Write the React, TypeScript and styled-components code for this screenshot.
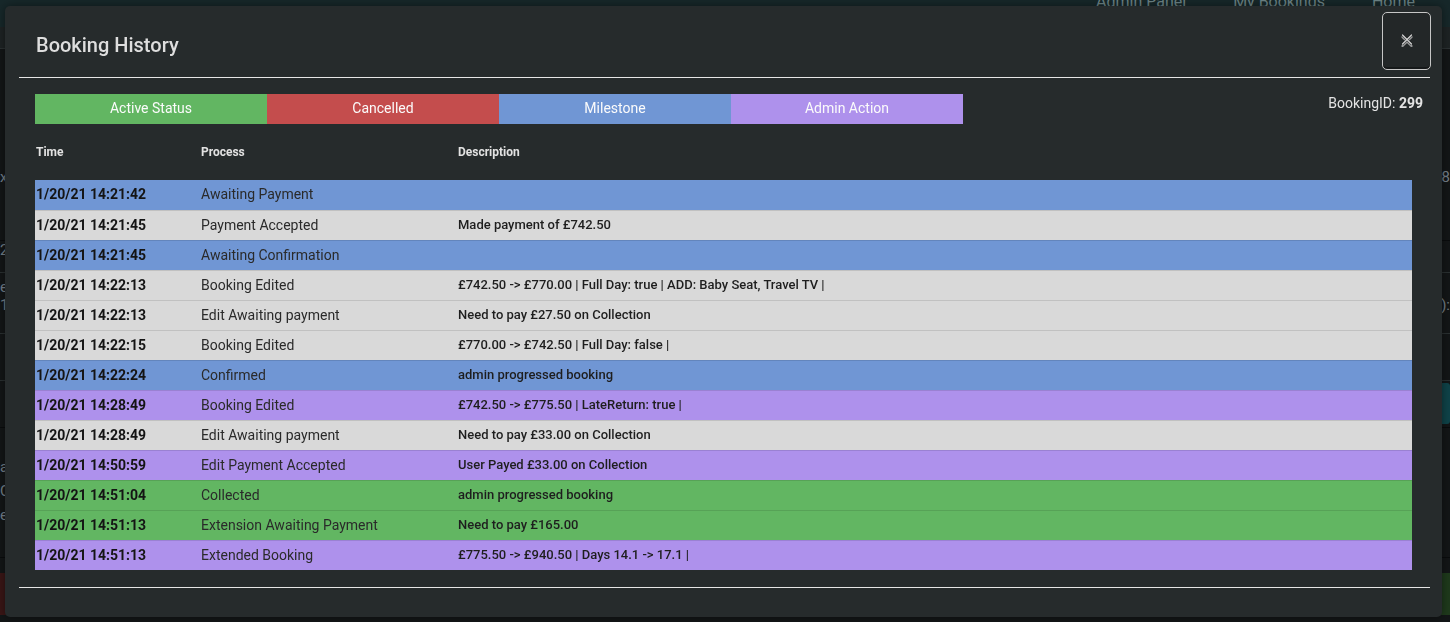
import React from "react";
import styled, { createGlobalStyle } from "styled-components";

const GlobalStyle = createGlobalStyle`
  html, body { margin: 0; padding: 0; height: 100%; }
  body {
    background: #131617;
    font-family: Roboto, "Liberation Sans", Arial, sans-serif;
    overflow: hidden;
  }
  * { box-sizing: border-box; }
`;

/* ---------- dimmed page behind the modal ---------- */
const Page = styled.div`
  height: 622px;
  display: flex;
  flex-direction: column;
  overflow: hidden;
`;

const NavBar = styled.nav`
  height: 27px;
  flex: none;
  background: #17282a;
  display: flex;
  justify-content: flex-end;
  align-items: flex-start;
  gap: 47px;
  padding-right: 35px;
`;

const NavLink = styled.span`
  font-size: 16px;
  line-height: 16px;
  color: #6d8486;
  margin-top: -6px;
`;

const SubBar = styled.div`
  height: 22px;
  flex: none;
  background: #1e2324;
  border-bottom: 1px solid #2c3233;
`;

const BgRow = styled.div<{ $h: number; $pad: number; $line?: string; $lh?: number }>`
  height: ${(p) => p.$h}px;
  flex: none;
  padding-top: ${(p) => p.$pad}px;
  display: flex;
  justify-content: space-between;
  align-items: flex-start;
  border-bottom: 1px solid ${(p) => p.$line || "#0a0c0d"};
  font-size: 15px;
  line-height: ${(p) => p.$lh || 18}px;
  color: #75808a;
  white-space: pre;
`;

const BgBox = styled.div<{ $bg: string }>`
  width: 120px;
  height: 41px;
  margin-top: 2px;
  background: ${(p) => p.$bg};
  border-radius: 3px;
`;

const BgBoxes = styled.div`
  height: 42px;
  margin-top: 15px;
  display: flex;
  justify-content: space-between;
`;

const BgBottomBox = styled.div<{ $bg: string }>`
  width: 160px;
  height: 42px;
  background: ${(p) => p.$bg};
`;

/* ---------- modal ---------- */
const Modal = styled.div`
  position: fixed;
  left: 5px;
  top: 6px;
  width: 1437px;
  height: 611px;
  background: #262b2c;
  border-radius: 5px;
  box-shadow: 0 0 10px rgba(0, 0, 0, 0.45);
  display: flex;
  flex-direction: column;
  color: #dddddd;
`;

const Header = styled.div`
  height: 71px;
  flex: none;
  display: flex;
  justify-content: space-between;
  align-items: flex-start;
  padding: 6px 11px 0 31px;
`;

const Title = styled.h5`
  margin: 21px 0 0;
  font-size: 20px;
  font-weight: 500;
  line-height: 24px;
  color: #dedede;
`;

const CloseButton = styled.button`
  width: 49px;
  height: 58px;
  padding: 0 0 4px;
  background: #232728;
  border: 1px solid #c6c6c6;
  border-radius: 5px;
  box-shadow: inset 0 -2px 0 rgba(0, 0, 0, 0.35);
  display: flex;
  align-items: center;
  justify-content: center;
  cursor: pointer;
  svg {
    display: block;
    filter: drop-shadow(0 2px 0 rgba(190, 190, 190, 0.75));
  }
`;

const Divider = styled.div`
  height: 1px;
  flex: none;
  background: #e6e6e6;
  margin: 0 12px 0 14px;
`;

const Body = styled.div`
  padding: 16px 19px 0 30px;
  display: flex;
  flex-direction: column;
`;

const TopRow = styled.div`
  display: flex;
  justify-content: space-between;
  align-items: flex-start;
`;

const Legend = styled.div`
  display: flex;
`;

const LegendItem = styled.div<{ $bg: string }>`
  width: 232px;
  height: 30px;
  background: ${(p) => p.$bg};
  color: #fbfbfb;
  font-size: 14px;
  line-height: 28px;
  text-align: center;
`;

const BookingId = styled.div`
  font-size: 14px;
  line-height: 18px;
  color: #e4e4e4;
  b { font-weight: 700; }
`;

const Table = styled.div`
  margin-right: 11px;
  display: flex;
  flex-direction: column;
`;

const columns = "165px 257px 1fr";

const HeadRow = styled.div`
  display: grid;
  grid-template-columns: ${columns};
  height: 56px;
  align-items: center;
  font-size: 12px;
  font-weight: 700;
  color: #e2e2e2;
`;

const HeadCell = styled.div`
  padding-left: 1px;
`;

const Row = styled.div<{ $bg: string }>`
  display: grid;
  grid-template-columns: ${columns};
  height: 30px;
  padding-bottom: 2px;
  align-items: center;
  background: ${(p) => p.$bg};
  color: #1f1f1f;
  & + & { border-top: 1px solid rgba(0, 0, 0, 0.11); }
`;

const TimeCell = styled.div`
  padding-left: 1px;
  font-size: 14px;
  font-weight: 700;
  color: #141414;
`;

const ProcessCell = styled.div`
  padding-left: 1px;
  font-size: 14px;
  color: #2a2a2a;
`;

const DescCell = styled.div`
  padding-left: 1px;
  font-size: 13px;
  font-weight: 500;
  color: #1e1e1e;
`;

const Footer = styled.div`
  margin-top: 17px;
  display: flex;
  flex-direction: column;
`;

const C = {
  green: "#62b662",
  red: "#c44d4d",
  blue: "#7096d4",
  purple: "#ae91ec",
  gray: "#d9d9d9",
};

type Entry = { c: string; t: string; p: string; d: string };

const entries: Entry[] = [
  { c: C.blue, t: "1/20/21 14:21:42", p: "Awaiting Payment", d: "" },
  { c: C.gray, t: "1/20/21 14:21:45", p: "Payment Accepted", d: "Made payment of £742.50" },
  { c: C.blue, t: "1/20/21 14:21:45", p: "Awaiting Confirmation", d: "" },
  { c: C.gray, t: "1/20/21 14:22:13", p: "Booking Edited", d: "£742.50 -> £770.00 | Full Day: true | ADD: Baby Seat, Travel TV |" },
  { c: C.gray, t: "1/20/21 14:22:13", p: "Edit Awaiting payment", d: "Need to pay £27.50 on Collection" },
  { c: C.gray, t: "1/20/21 14:22:15", p: "Booking Edited", d: "£770.00 -> £742.50 | Full Day: false |" },
  { c: C.blue, t: "1/20/21 14:22:24", p: "Confirmed", d: "admin progressed booking" },
  { c: C.purple, t: "1/20/21 14:28:49", p: "Booking Edited", d: "£742.50 -> £775.50 | LateReturn: true |" },
  { c: C.gray, t: "1/20/21 14:28:49", p: "Edit Awaiting payment", d: "Need to pay £33.00 on Collection" },
  { c: C.purple, t: "1/20/21 14:50:59", p: "Edit Payment Accepted", d: "User Payed £33.00 on Collection" },
  { c: C.green, t: "1/20/21 14:51:04", p: "Collected", d: "admin progressed booking" },
  { c: C.green, t: "1/20/21 14:51:13", p: "Extension Awaiting Payment", d: "Need to pay £165.00" },
  { c: C.purple, t: "1/20/21 14:51:13", p: "Extended Booking", d: "£775.50 -> £940.50 | Days 14.1 -> 17.1 |" },
];

export default function App() {
  return (
    <>
      <GlobalStyle />
      <Page>
        <NavBar>
          <NavLink>Admin Panel</NavLink>
          <NavLink>My Bookings</NavLink>
          <NavLink>Home</NavLink>
        </NavBar>
        <SubBar />
        <BgRow $h={192} $pad={119}>
          <span>xi</span>
          <span>8</span>
        </BgRow>
        <BgRow $h={32} $pad={0} $line="#2a3031">
          <span>2</span>
          <span />
        </BgRow>
        <BgRow $h={61} $pad={5} $line="#2a3031">
          <span>{"e\n1"}</span>
          <span>{"\n):"}</span>
        </BgRow>
        <BgRow $h={47} $pad={0} $line="#2a3031">
          <span />
          <span />
        </BgRow>
        <BgRow $h={47} $pad={0}>
          <span />
          <BgBox $bg="#0f4349" />
        </BgRow>
        <BgRow $h={130} $pad={27} $lh={24}>
          <span>{"ar\nC\ne"}</span>
          <span />
        </BgRow>
        <BgBoxes>
          <BgBottomBox $bg="#3a1616" />
          <BgBottomBox $bg="#1f3a1c" />
        </BgBoxes>
      </Page>

      <Modal>
        <Header>
          <Title>Booking History</Title>
          <CloseButton aria-label="Close">
            <svg width="12" height="11" viewBox="0 0 12 11">
              <path
                d="M1.5 1 L10.5 10 M10.5 1 L1.5 10"
                stroke="#1a1c1d"
                strokeWidth="2.2"
                strokeLinecap="round"
              />
              <path
                d="M1.5 1 L10.5 10 M10.5 1 L1.5 10"
                stroke="#d2d2d2"
                strokeWidth="1.3"
                strokeLinecap="round"
              />
            </svg>
          </CloseButton>
        </Header>
        <Divider />
        <Body>
          <TopRow>
            <Legend>
              <LegendItem $bg={C.green}>Active Status</LegendItem>
              <LegendItem $bg={C.red}>Cancelled</LegendItem>
              <LegendItem $bg={C.blue}>Milestone</LegendItem>
              <LegendItem $bg={C.purple}>Admin Action</LegendItem>
            </Legend>
            <BookingId>
              BookingID: <b>299</b>
            </BookingId>
          </TopRow>
          <Table>
            <HeadRow>
              <HeadCell>Time</HeadCell>
              <HeadCell>Process</HeadCell>
              <HeadCell>Description</HeadCell>
            </HeadRow>
            {entries.map((e, i) => (
              <Row key={i} $bg={e.c}>
                <TimeCell>{e.t}</TimeCell>
                <ProcessCell>{e.p}</ProcessCell>
                <DescCell>{e.d}</DescCell>
              </Row>
            ))}
          </Table>
        </Body>
        <Footer>
          <Divider />
        </Footer>
      </Modal>
    </>
  );
}
